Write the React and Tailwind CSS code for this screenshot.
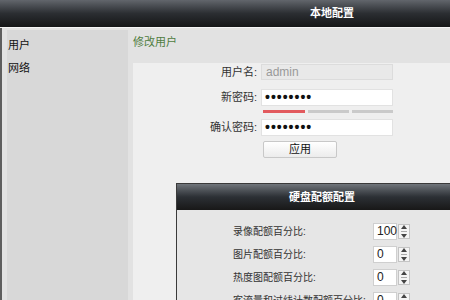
const cjk = { fontFamily: '"Liberation Sans", "Noto Sans CJK SC", sans-serif' };

function Field({ label, children }) {
  return (
    <div className="flex items-center">
      <div className="w-[126px] pr-[2px] text-right text-[11px] text-[#333]">{label}:</div>
      <div className="ml-[2px]">{children}</div>
    </div>
  );
}

function Spinner() {
  return (
    <div className="ml-[1px] flex h-[15px] w-[12px] flex-col items-center justify-center gap-[2px] border border-[#c4c4c4] bg-[#f4f4f4]">
      <div className="h-0 w-0 border-x-[3px] border-b-[4px] border-x-transparent border-b-[#444]" />
      <div className="h-px w-[6px] bg-[#aaa]" />
      <div className="h-0 w-0 border-x-[3px] border-t-[4px] border-x-transparent border-t-[#444]" />
    </div>
  );
}

function QuotaRow({ label, value }) {
  return (
    <div className="flex h-[16px] items-center">
      <div className="w-[140px] whitespace-nowrap text-[10px] text-[#333]">{label}:</div>
      <div className="flex items-center">
        <div className="flex h-[17px] w-[24px] items-center border border-[#cfcfcf] bg-white pl-[3px] text-[12px] text-[#222]">
          {value}
        </div>
        <Spinner />
      </div>
    </div>
  );
}

function Dots() {
  return (
    <div className="flex h-[17px] w-[132px] items-center border border-[#e2e2e2] bg-white pl-[3px] text-[14px] font-bold tracking-[1px] text-[#111]">
      ••••••••
    </div>
  );
}

export default function App() {
  return (
    <div className="relative flex h-[300px] w-[450px] flex-col overflow-hidden bg-[#e2e2e2]" style={cjk}>
      <div className="flex h-[27px] shrink-0 items-center justify-center bg-gradient-to-b from-[#62666c] via-[#2b2e32] to-[#151617] pl-[214px] text-[11px] font-bold text-white">
        本地配置
      </div>
      <div className="h-px shrink-0 bg-[#f4f4f4]" />
      <div className="flex flex-1 border-l-2 border-[#5e5e5e]">
        <div className="ml-[5px] mt-[2px] w-[121px] bg-[#d8d8d8] px-[1px] pt-[4px] text-[11px] text-[#111]">
          <div className="h-[23px] leading-[23px]">用户</div>
          <div className="h-[23px] leading-[23px]">网络</div>
        </div>
        <div className="ml-[5px] flex flex-1 flex-col">
          <div className="h-[35px] pt-[6px] text-[11px] text-[#4f7d3f]">修改用户</div>
          <div className="flex flex-1 flex-col bg-[#efefef] pt-[1px]">
            <Field label="用户名">
              <div className="flex h-[16px] w-[132px] items-center border border-[#dcdcdc] bg-[#e9e9e9] pl-[4px] text-[12px] text-[#999]">
                admin
              </div>
            </Field>
            <div className="mt-[8px]">
              <Field label="新密码">
                <Dots />
              </Field>
            </div>
            <div className="ml-[130px] mt-[4px] flex gap-[3px]">
              <div className="h-[3px] w-[42px] bg-[#e25a5e]" />
              <div className="h-[3px] w-[41px] bg-[#cacaca]" />
              <div className="h-[3px] w-[41px] bg-[#cacaca]" />
            </div>
            <div className="mt-[6px]">
              <Field label="确认密码">
                <Dots />
              </Field>
            </div>
            <div className="ml-[130px] mt-[5px]">
              <div className="flex h-[17px] w-[74px] items-center justify-center rounded-[2px] border border-[#c8c8c8] bg-gradient-to-b from-white to-[#ececec] text-[11px] text-[#111]">
                应用
              </div>
            </div>
          </div>
        </div>
      </div>

      <div className="absolute left-[176px] top-[183px] flex h-[140px] w-[292px] flex-col border border-[#3a3a3a] bg-[#e6e6e6]">
        <div className="flex h-[26px] shrink-0 items-center justify-center bg-gradient-to-b from-[#70757b] via-[#2c3035] to-[#181818] text-[11px] font-bold text-white">
          硬盘配额配置
        </div>
        <div className="flex flex-col gap-[7px] pl-[56px] pt-[13px]">
          <QuotaRow label="录像配额百分比" value="100" />
          <QuotaRow label="图片配额百分比" value="0" />
          <QuotaRow label="热度图配额百分比" value="0" />
          <QuotaRow label="客流量和过线计数配额百分比" value="0" />
        </div>
      </div>
    </div>
  );
}
